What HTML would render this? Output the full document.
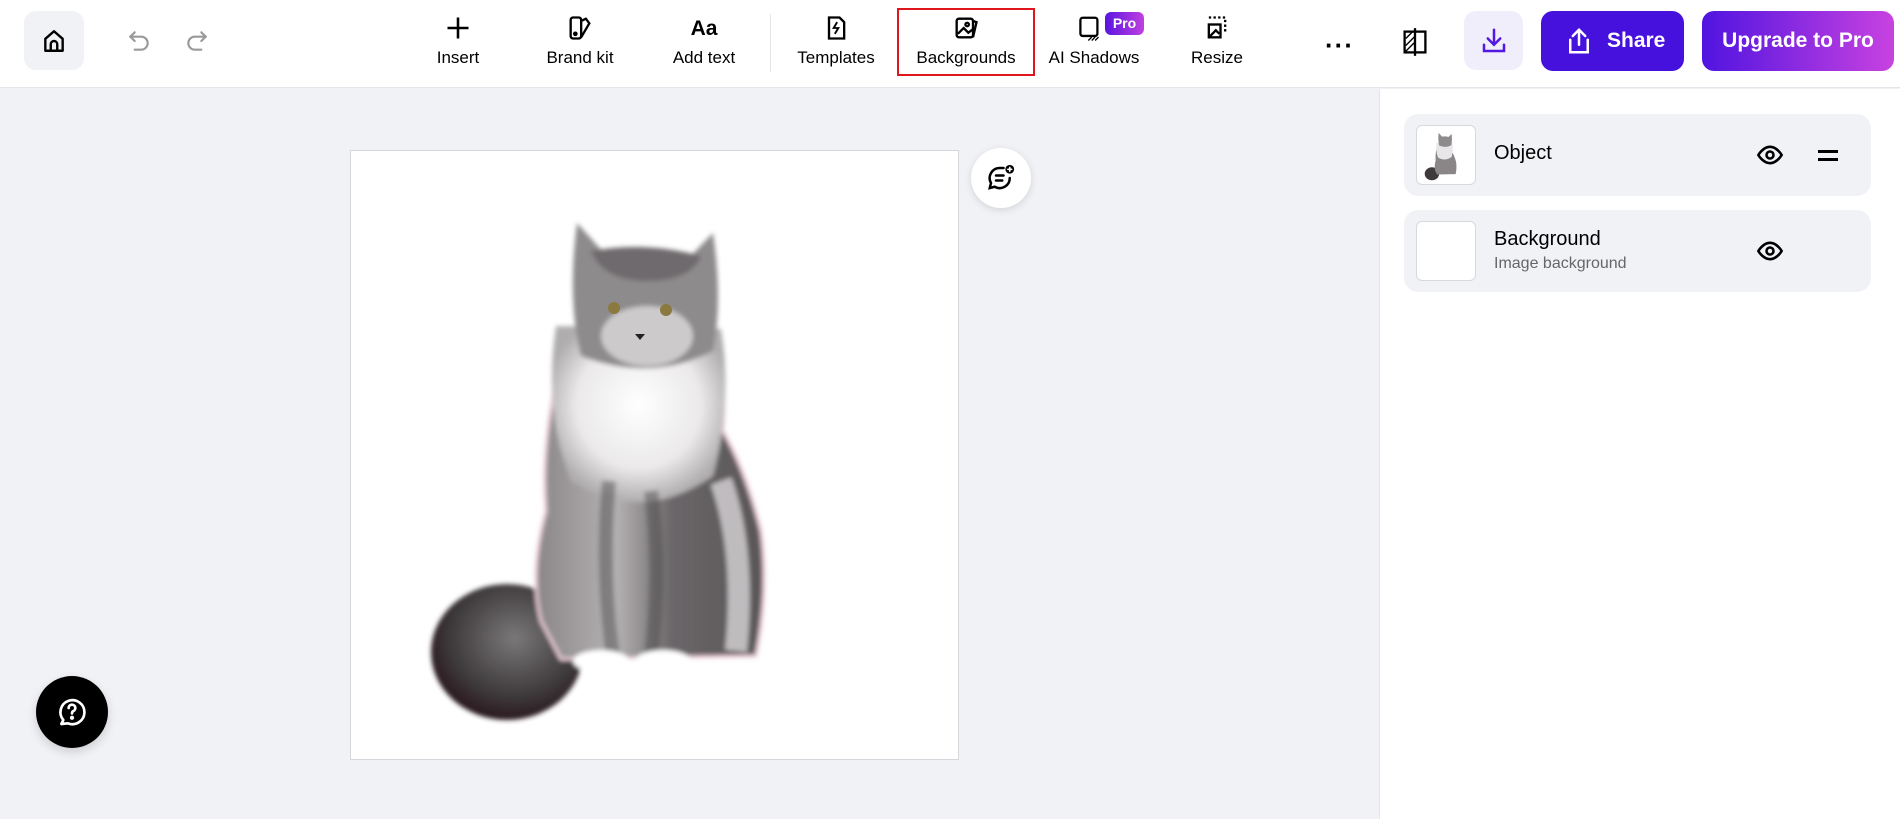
<!DOCTYPE html>
<html><head><meta charset="utf-8"><style>
*{margin:0;padding:0;box-sizing:border-box}
body{width:1900px;height:819px;overflow:hidden;background:#f1f2f6;font-family:"Liberation Sans",sans-serif;color:#000;position:relative}
.top{position:absolute;left:0;top:0;width:1900px;height:88px;background:#fff;border-bottom:1px solid #e4e5ea}
.abs{position:absolute}
.tool{position:absolute;top:14px;width:110px;margin-left:-55px;text-align:center;font-size:17px}
.tool svg{display:block;margin:0 auto 6px;height:28px}
.panel{position:absolute;left:1379px;top:89px;width:521px;height:730px;background:#fff;border-left:1px solid #e4e5ea}
.card{position:absolute;left:1404px;width:467px;height:82px;background:#f1f2f6;border-radius:14px}
.thumb{position:absolute;left:12px;top:11px;width:60px;height:60px;background:#fff;border:1px solid #d8d9de;border-radius:6px;overflow:hidden}
</style></head><body>
<div class="top">
 <div class="abs" style="left:24px;top:11px;width:60px;height:59px;background:#f1f2f6;border-radius:12px"></div>
 <svg class="abs" style="left:41px;top:28px" width="26" height="26" viewBox="0 0 24 24" fill="none" stroke="#000" stroke-width="2.2" stroke-linejoin="round"><path d="M4 21V10l8-7 8 7v11z"/><path d="M9 21v-6a3 3 0 0 1 6 0v6"/></svg>
 <svg class="abs" style="left:126px;top:28px" width="26" height="26" viewBox="0 0 24 24" fill="none" stroke="#999" stroke-width="2" stroke-linecap="round"><path d="M8 4L4 8l4 4"/><path d="M4 8h10a6 6 0 0 1 0 12H8"/></svg>
 <svg class="abs" style="left:184px;top:28px" width="26" height="26" viewBox="0 0 24 24" fill="none" stroke="#999" stroke-width="2" stroke-linecap="round"><path d="M16 4l4 4-4 4"/><path d="M20 8H10a6 6 0 0 0 0 12h6"/></svg>
 <div class="tool" style="left:458px"><svg viewBox="0 0 24 24" width="28" fill="none" stroke="#000" stroke-width="2.2"><path d="M12 3v18M3 12h18"/></svg>Insert</div>
 <div class="tool" style="left:580px"><svg viewBox="0 0 24 24" width="28" fill="none" stroke="#000" stroke-width="2"><rect x="4" y="3" width="9" height="18" rx="2"/><path d="M13 6l4-2 3 4-7 12"/><circle cx="8" cy="17" r="1" fill="#000"/></svg>Brand kit</div>
 <div class="tool" style="left:704px"><div style="height:28px;margin-bottom:6px;font-size:21px;font-weight:bold;line-height:30px">Aa</div>Add text</div>
 <div class="abs" style="left:770px;top:14px;width:1px;height:58px;background:#e4e5ea"></div>
 <div class="tool" style="left:836px"><svg viewBox="0 0 24 24" width="28" fill="none" stroke="#000" stroke-width="2"><path d="M6 3h9l4 4v14H6z"/><path d="M13 7l-3 5h4l-3 5" stroke-width="1.6"/></svg>Templates</div>
 <div class="abs" style="left:897px;top:8px;width:138px;height:68px;border:2px solid #e0161e"></div>
 <div class="tool" style="left:966px"><svg viewBox="0 0 24 24" width="28" fill="none" stroke="#000" stroke-width="2"><rect x="4" y="4" width="14" height="16" rx="2"/><path d="M18 6l3 1-3 13"/><path d="M5 17l5-5 4 4 4-3"/><circle cx="13" cy="9" r="1.5"/></svg>Backgrounds</div>
 <div class="tool" style="left:1094px"><svg viewBox="0 0 30 24" width="34" fill="none" stroke="#000" stroke-width="2"><rect x="3" y="3" width="15" height="16" rx="2"/><path d="M10 23l3-3M13 23l3-3M16 23l3-3" stroke-width="1.2"/></svg>AI Shadows</div>
 <div class="abs" style="left:1105px;top:12px;width:39px;height:23px;border-radius:6px;background:linear-gradient(90deg,#5a14e0,#c040e0);color:#fff;font-size:14px;font-weight:bold;text-align:center;line-height:23px">Pro</div>
 <div class="tool" style="left:1217px"><svg viewBox="0 0 24 24" width="28" fill="none" stroke="#000" stroke-width="2"><path d="M5 3h14v14" stroke-dasharray="2 2"/><rect x="5" y="9" width="10" height="11"/><path d="M6 19l5-5 3 3"/></svg>Resize</div>
 <div class="abs" style="left:1325px;top:30px;font-size:26px;font-weight:bold;letter-spacing:1px">&middot;&middot;&middot;</div>
 <svg class="abs" style="left:1401px;top:27px" width="28" height="30" viewBox="0 0 24 26" fill="none" stroke="#000" stroke-width="2"><rect x="3" y="4" width="18" height="18"/><path d="M12 1v24"/><path d="M4 10l6-6M4 16l8-8M4 21l8-8" stroke-width="1.2"/></svg>
 <div class="abs" style="left:1464px;top:11px;width:59px;height:59px;background:#f1eefc;border-radius:12px"></div>
 <svg class="abs" style="left:1479px;top:26px" width="30" height="30" viewBox="0 0 24 24" fill="none" stroke="#5518e0" stroke-width="2" stroke-linecap="round"><path d="M12 3v12M7 10l5 5 5-5M4 15v5h16v-5"/></svg>
 <div class="abs" style="left:1541px;top:11px;width:143px;height:60px;background:#4610dd;border-radius:12px;color:#fff;font-size:21px;font-weight:bold;line-height:60px;padding-left:66px">Share</div>
 <svg class="abs" style="left:1564px;top:26px" width="30" height="30" viewBox="0 0 24 24" fill="none" stroke="#fff" stroke-width="2" stroke-linecap="round"><path d="M12 15V3M7 8l5-5 5 5M5 11v10h14V11"/></svg>
 <div class="abs" style="left:1702px;top:11px;width:192px;height:60px;background:linear-gradient(90deg,#5014e0,#c842e0);border-radius:12px;color:#fff;font-size:21px;font-weight:bold;line-height:60px;text-align:center">Upgrade to Pro</div>
</div>

<div class="abs" style="left:350px;top:150px;width:609px;height:610px;background:#fff;border:1px solid #d5d7dd">
<svg width="607" height="608" viewBox="0 0 607 608">
<defs>
<radialGradient id="tail" cx="0.55" cy="0.4" r="0.6"><stop offset="0" stop-color="#7a7878"/><stop offset="0.7" stop-color="#3e3a3c"/><stop offset="1" stop-color="#2a1a20"/></radialGradient>
<linearGradient id="bd" x1="0" x2="1"><stop offset="0" stop-color="#8a8688"/><stop offset="0.35" stop-color="#b5b2b3"/><stop offset="0.6" stop-color="#6a6668"/><stop offset="1" stop-color="#5a5658"/></linearGradient>
<radialGradient id="ch" cx="0.5" cy="0.45" r="0.55"><stop offset="0" stop-color="#fff"/><stop offset="0.65" stop-color="#ebe9ea"/><stop offset="1" stop-color="#b0adaf"/></radialGradient>
<filter id="bl"><feGaussianBlur stdDeviation="2.5"/></filter>
</defs>
<g filter="url(#bl)">
<ellipse cx="156" cy="501" rx="76" ry="68" fill="url(#tail)"/>
<path d="M205 230 Q190 300 195 360 Q178 420 190 470 L210 508 L405 505 Q418 440 410 380 Q395 320 372 280 Q375 230 365 200 Z" fill="url(#bd)" stroke="#ecd0d8" stroke-width="3"/>
<path d="M205 175 Q192 260 220 330 Q290 375 362 325 Q382 250 370 178 Z" fill="url(#ch)"/>
<path d="M226 72 L262 112 Q295 105 330 115 L362 82 Q372 150 362 200 Q300 232 230 205 Q216 150 226 72 Z" fill="#8e8b8d"/>
<path d="M240 100 Q295 90 350 105 Q340 130 296 130 Q252 130 240 100Z" fill="#6e6b6d"/>
<ellipse cx="296" cy="185" rx="46" ry="30" fill="#cdcacc"/>
<path d="M258 330 Q250 420 262 505 M300 340 Q310 420 300 505" stroke="#444" stroke-width="14" fill="none" opacity="0.45"/>
<path d="M370 330 Q395 400 385 500" stroke="#e8e6e8" stroke-width="22" fill="none" opacity="0.7"/>
<ellipse cx="250" cy="510" rx="28" ry="11" fill="#fff"/>
<ellipse cx="312" cy="510" rx="28" ry="11" fill="#fff"/>
</g>
<circle cx="263" cy="157" r="6" fill="#8a7a40"/><circle cx="315" cy="159" r="6" fill="#8a7a40"/>
<path d="M284 183 l10 0 -5 6z" fill="#222"/>
</svg>
</div>

<div class="abs" style="left:971px;top:148px;width:60px;height:60px;border-radius:50%;background:#fff;box-shadow:0 2px 8px rgba(0,0,0,.12)"></div>
<svg class="abs" style="left:986px;top:163px" width="30" height="30" viewBox="0 0 24 24" fill="none" stroke="#000" stroke-width="2" stroke-linecap="round"><path d="M14 4H11a8 8 0 0 0-7 12l-1 4 4-1a8 8 0 0 0 12-7"/><path d="M8 10h6M8 14h5"/><circle cx="19" cy="5" r="3.5" fill="#000" stroke="none"/><path d="M19 3.5v3M17.5 5h3" stroke="#fff" stroke-width="1.3"/></svg>

<div class="abs" style="left:36px;top:676px;width:72px;height:72px;border-radius:50%;background:#000;box-shadow:0 4px 10px rgba(0,0,0,.15)"></div>
<svg class="abs" style="left:56px;top:696px" width="32" height="32" viewBox="0 0 24 24" fill="none" stroke="#fff" stroke-width="2" stroke-linecap="round"><path d="M4 21l1.5-3A9 9 0 1 1 9 20.5z" stroke-linejoin="round"/><path d="M9.5 9a2.5 2.5 0 1 1 3.5 2.3c-.7.4-1 .9-1 1.7"/><circle cx="12" cy="16.3" r=".6" fill="#fff"/></svg>

<div class="panel"></div>
<div class="card" style="top:114px">
 <div class="thumb"><svg width="58" height="58" viewBox="0 0 607 608"><ellipse cx="156" cy="501" rx="76" ry="68" fill="#3e3a3c"/><path d="M205 230 Q190 300 195 360 Q178 420 190 470 L210 508 L405 505 Q418 440 410 380 Q395 320 372 280 Q375 230 365 200 Z" fill="#8a8688"/><path d="M205 175 Q192 260 220 330 Q290 375 362 325 Q382 250 370 178 Z" fill="#e8e6e8"/><path d="M226 72 L262 112 Q295 105 330 115 L362 82 Q370 150 360 200 Q300 235 232 205 Q218 150 226 72 Z" fill="#8e8b8d"/></svg></div>
 <div class="abs" style="left:90px;top:28px;font-size:20px">Object</div>
 <svg class="abs" style="left:352px;top:27px" width="28" height="28" viewBox="0 0 24 24" fill="none" stroke="#000" stroke-width="2.2"><path d="M2 12s4-7 10-7 10 7 10 7-4 7-10 7S2 12 2 12z"/><circle cx="12" cy="12" r="3"/></svg>
 <div class="abs" style="left:414px;top:36px;width:20px;height:2.5px;background:#000"></div>
 <div class="abs" style="left:414px;top:44px;width:20px;height:2.5px;background:#000"></div>
</div>
<div class="card" style="top:210px">
 <div class="thumb"></div>
 <div class="abs" style="left:90px;top:18px;font-size:20px">Background</div>
 <div class="abs" style="left:90px;top:45px;font-size:16px;color:#666">Image background</div>
 <svg class="abs" style="left:352px;top:27px" width="28" height="28" viewBox="0 0 24 24" fill="none" stroke="#000" stroke-width="2.2"><path d="M2 12s4-7 10-7 10 7 10 7-4 7-10 7S2 12 2 12z"/><circle cx="12" cy="12" r="3"/></svg>
</div>
</body></html>
